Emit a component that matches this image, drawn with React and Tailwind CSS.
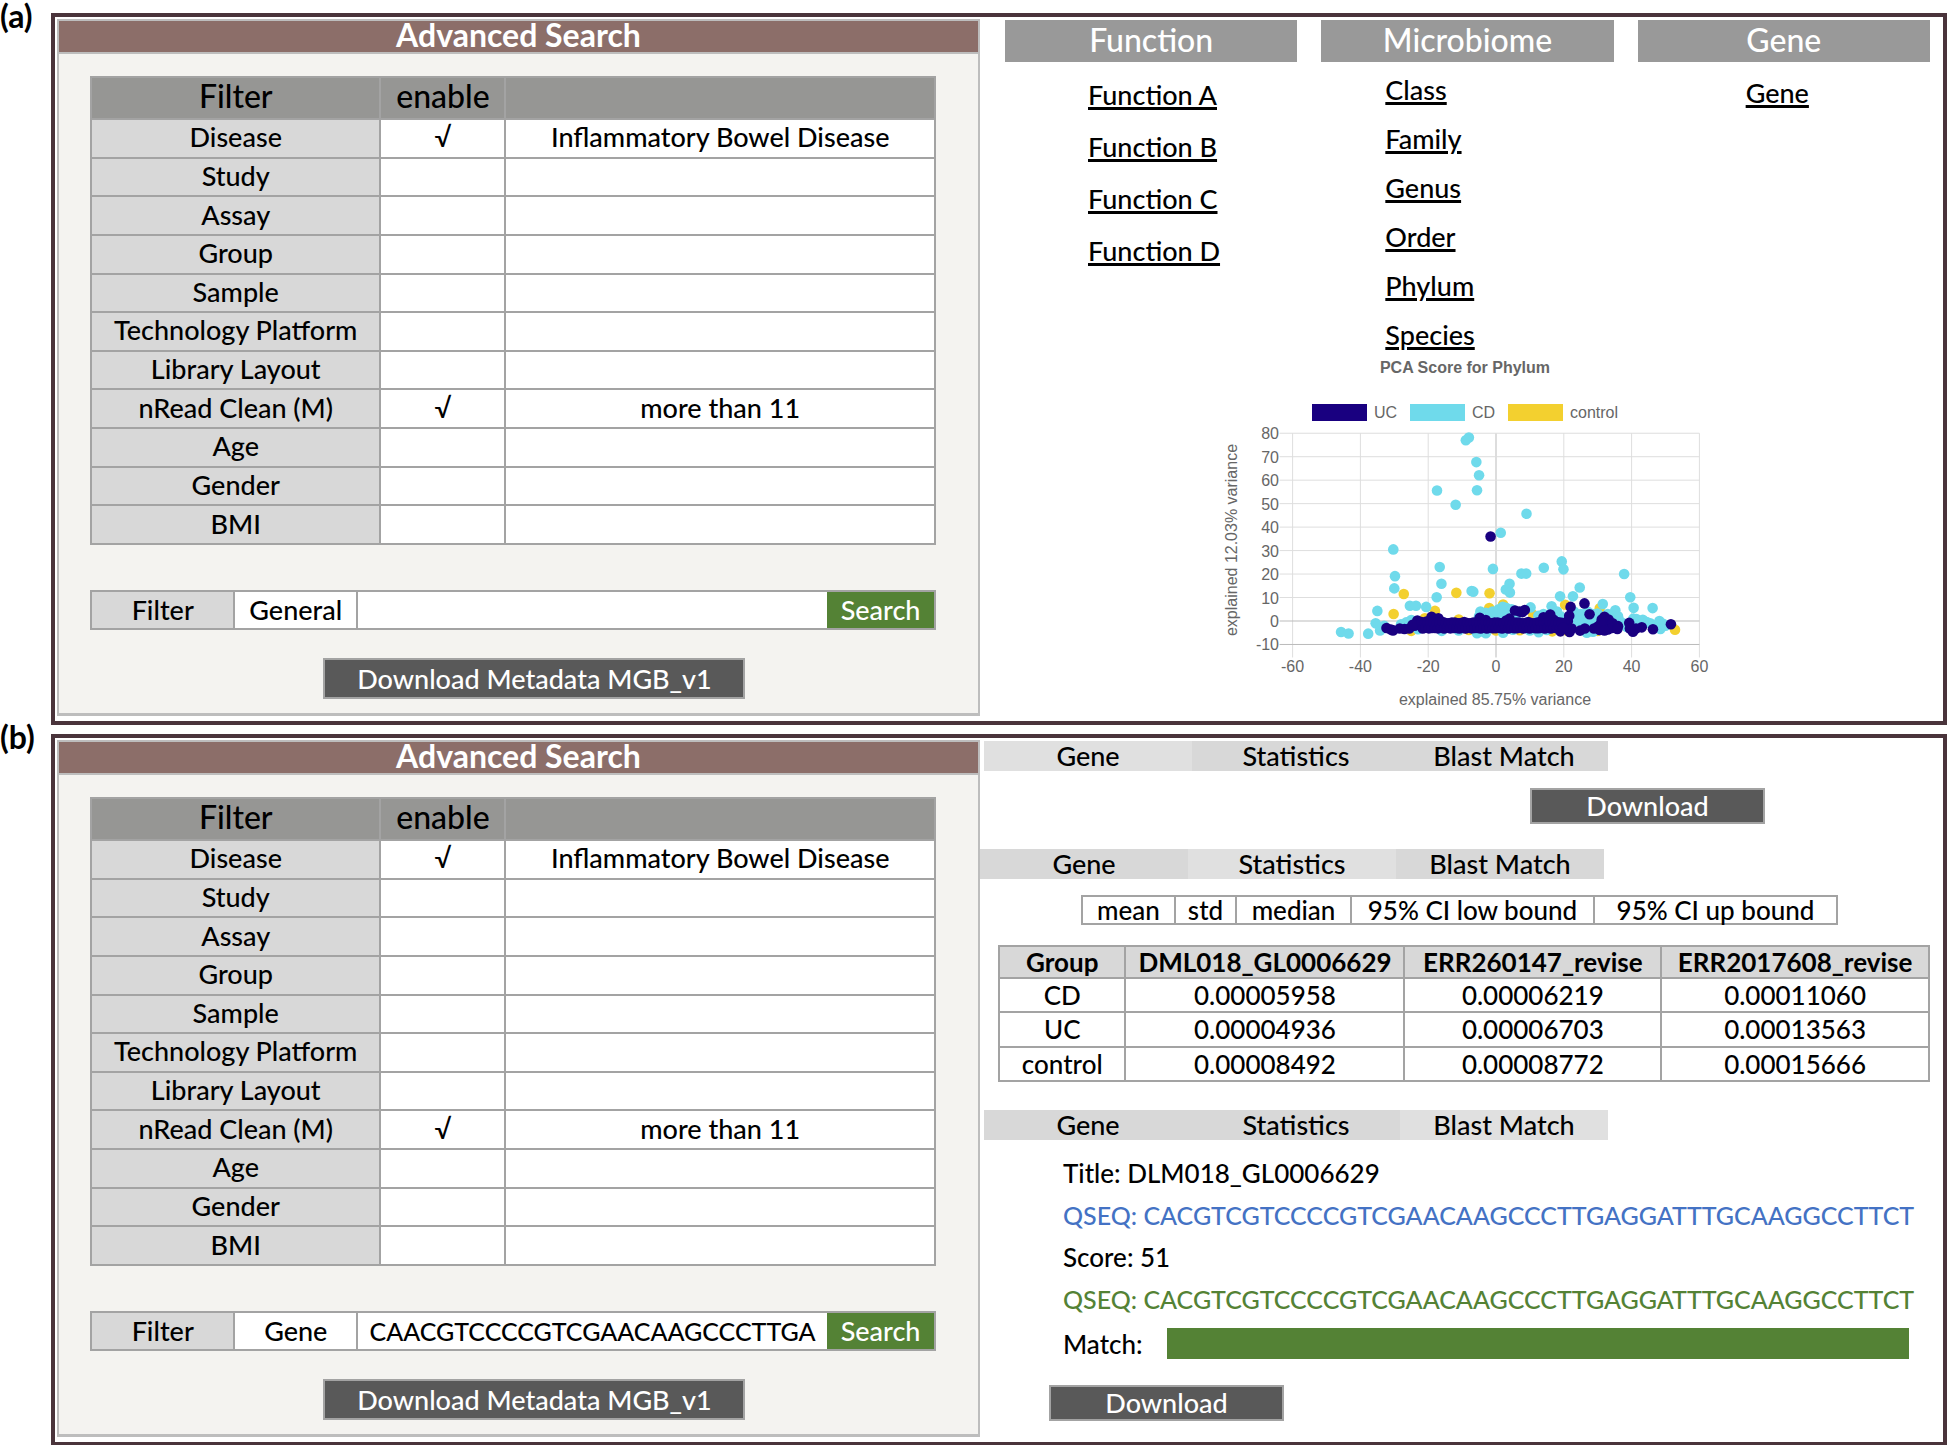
import React, { useState } from "react";

const filters = [
  { name: "Disease", value: "Inflammatory Bowel Disease" },
  { name: "Study" },
  { name: "Assay" },
  { name: "Group" },
  { name: "Sample" },
  { name: "Technology Platform" },
  { name: "Library Layout" },
  { name: "nRead Clean (M)", value: "more than 11" },
  { name: "Age" },
  { name: "Gender" },
  { name: "BMI" },
];

const functions = ["Function A", "Function B", "Function C", "Function D"];
const ranks = ["Class", "Family", "Genus", "Order", "Phylum", "Species"];

const abundance = [
  ["CD", "0.00005958", "0.00006219", "0.00011060"],
  ["UC", "0.00004936", "0.00006703", "0.00013563"],
  ["control", "0.00008492", "0.00008772", "0.00015666"],
];

const sequence = "CACGTCGTCCCCGTCGAACAAGCCCTTGAGGATTTGCAAGGCCTTCT";

// PCA scores as [PC1, PC2]
const control = [
  [-27.2, 11.5], [-30.2, 3], [-11.7, 12], [-1.9, 11.8], [-2, 5.5], [2.1, 7], [-18, 4.3],
  [20.4, 6.9], [52.8, -3.7], [-25, -4.2], [-21, 1.2], [-11, 0.6], [11, 2.6], [30.6, 5.4],
  [-8, -3.8], [0, -4], [7, -3.9], [16.6, -4.4], [21, -4.2], [30, -4.2],
];

const cd = [
  [-8.9, 77], [-8, 78.2], [-5.8, 67.7], [-5, 62.1], [-5.6, 55.7], [-17.4, 55.6], [-11.9, 49.5],
  [9, 45.7], [1.4, 37.6], [-30.3, 30.5], [-29.8, 19.1], [-30, 13.9], [-16.6, 23], [-16.1, 15.9],
  [-17.5, 10.1], [-0.9, 22.2], [-7.2, 12.8], [-6.7, 12.5], [4, 15.9], [2.9, 13.4], [4.1, 12.1],
  [7.5, 20.2], [8.9, 20.2], [14.1, 22.7], [19.4, 25.4], [19.9, 22], [37.8, 20], [24.7, 14.3],
  [18.9, 10.5], [22.7, 10.5], [39.6, 10.1], [40.6, 5.6], [46.2, 5.5], [31.5, 7.2], [35.2, 4.6],
  [-35, 4.3], [-35.5, -1], [-45.7, -4.7], [-43.5, -5.3], [-37.7, -5.4], [-34.2, -4], [-33, -2],
  [-25.4, 6.5], [-23.6, 6.5], [-20.6, 6], [10.2, 5.8], [16.4, 6.3], [-4.6, 4], [-3, 3.5],
  [-1, 4], [0.8, 5], [2, 6], [3, 5.6], [4.6, 5], [-0.2, 2], [1.8, 3], [3.5, 3], [6, 2.6], [-5, 2],
  [-28, -1.4], [-26.5, -0.6], [-25, 0.4], [-23, -3.5], [-16, -4.2], [-11, -4], [-5.6, -5.2],
  [-3, -5.2], [-4.4, -4.4], [2.1, -5], [12.6, -4.8], [5, -3.7], [10, -4], [15, -3.8], [18, 4],
  [12.5, 2.2], [14, 3], [19, 2], [23, 4], [24, 2], [25, 3], [26, 1], [27, 4], [28.5, 3], [29, 1],
  [30, 3.2], [24, 0], [25.6, -1], [27, -0.5], [28, -2], [29, 0], [33, 3], [34.5, 2], [36, 2],
  [36.5, 0], [37.5, -1], [26.8, -5], [28.6, -4.6], [38.5, -2.5], [40.5, 1], [41.4, 0.8],
  [43.3, 0.5], [44.5, -0.5], [45.5, -1], [47, -2], [48.2, 0], [49.3, -1.2], [48.5, -3.4], [50, -2],
];

const uc = [
  [-1.6, 36], [5.6, 4.5], [7, 4], [8.5, 4.7], [7.8, 3.8], [22, 6], [26.1, 7.5], [27.6, 2.9],
  [51.6, -1.4], [46.3, -3.5], [43, -2.7], [39.3, -0.8], [40.4, -4.6], [41.3, -3.2], [39.5, -3.2],
  [-32.3, -3], [-31, -3.6], [-30.4, -4], [-28.4, -3.2], [-27, -3.4], [-25.6, -3.2], [-24, -2],
  [-23.2, 0.2], [-24.6, -1.6], [-19, 1.8], [-17, 1.2], [-20.5, -0.2], [-4.8, 1.4], [-3, 0.4],
  [4, 1], [3, 0.2], [14, 1.6], [16, 2.8], [15, 1], [17, 0.5], [13.2, -0.3], [21.6, 2.2], [21.2, 0],
  [20.4, -1.5], [19, -4.4], [21.7, -4.7], [20.4, -3], [22.3, -3.2], [24.8, -4.1], [26.2, -3.2],
  [19.2, -1.5], [28.9, -3.2], [30, -2.4], [30.6, -3.8], [31.2, 0.6], [32, 1.8], [33.2, 0.6],
  [32.4, -1.6], [31, -1], [33, -3.6], [34.4, -1], [34.2, -3], [36, -2.2], [35.8, -3.4], [32, -4],
];

// the samples crowd into a narrow band just under zero
for (let x = -22; x < 20; x += 0.9) {
  uc.push([x, -0.4 - Math.abs(Math.sin(x)) * 0.6], [x + 0.4, -2.6 - Math.abs(Math.cos(x * 2)) * 0.6]);
}

const series = [
  { name: "control", color: "#f3d02f", points: control },
  { name: "CD", color: "#6fdaeb", points: cd },
  { name: "UC", color: "#190080", points: uc },
];

const legend = [
  { name: "UC", color: "#190080", x: 92 },
  { name: "CD", color: "#6fdaeb", x: 190 },
  { name: "control", color: "#f3d02f", x: 288 },
];

const px = (v) => 276 + v * 3.39;
const py = (v) => 263 - v * 2.347;

function PcaChart() {
  const xTicks = [-60, -40, -20, 0, 20, 40, 60];
  const yTicks = [-10, 0, 10, 20, 30, 40, 50, 60, 70, 80];

  return (
    <svg
      viewBox="0 0 500 355"
      className="block w-[500px] h-[355px] font-['Liberation_Sans',sans-serif] font-normal"
      fill="#666"
    >
      <text x="245" y="15" fontSize="16" fontWeight="bold" textAnchor="middle">
        PCA Score for Phylum
      </text>
      {legend.map((item) => (
        <g key={item.name}>
          <rect x={item.x} y="46" width="55" height="17" fill={item.color} />
          <text x={item.x + 62} y="60" fontSize="16">{item.name}</text>
        </g>
      ))}

      {xTicks.map((t) => (
        <g key={t}>
          <line x1={px(t)} x2={px(t)} y1={py(80)} y2={py(-10) + 13} stroke={t === 0 ? "#bbb" : "#dedede"} />
          <text x={px(t)} y="314" fontSize="16" textAnchor="middle">{t}</text>
        </g>
      ))}
      {yTicks.map((t) => (
        <g key={t}>
          <line x1={px(-60) - 13} x2={px(60)} y1={py(t)} y2={py(t)} stroke={t === 0 || t === -10 ? "#bbb" : "#dedede"} />
          <text x="59" y={py(t) + 6} fontSize="16" textAnchor="end">{t}</text>
        </g>
      ))}

      {series.map((s) => (
        <g key={s.name} fill={s.color}>
          {s.points.map(([x, y], i) => (
            <circle key={i} cx={px(x)} cy={py(y)} r="5.3" />
          ))}
        </g>
      ))}

      <text x="275" y="347" fontSize="16" textAnchor="middle">explained 85.75% variance</text>
      <text transform="translate(17 182) rotate(-90)" fontSize="16" textAnchor="middle">
        explained 12.03% variance
      </text>
    </svg>
  );
}

function AdvancedSearch({ id, scope, initialQuery }) {
  const [query, setQuery] = useState(initialQuery);

  return (
    <section className="border-2 border-b-[3px] border-[#bdbdbd] bg-[#f4f3f0]">
      <h2 className="h-[31px] bg-[#8c6e69] text-center text-[32px] leading-[27px] font-bold text-white">
        Advanced Search
      </h2>
      <div className="border-t-2 border-[#bdbdbd] pt-[22px] pb-[14px] pl-[31px] pr-[42px]">
        <table className="h-[469px] w-full table-fixed border-collapse bg-white text-center text-[27px] leading-[30px]">
          <colgroup>
            <col className="w-[34.3%]" />
            <col className="w-[14.8%]" />
            <col />
          </colgroup>
          <thead>
            <tr className="h-[42px] bg-[#969694] text-[32px]">
              <th className="border-2 border-[#a3a3a3] pb-1 font-medium">Filter</th>
              <th className="border-2 border-[#a3a3a3] pb-1 font-medium">enable</th>
              <th className="border-2 border-[#a3a3a3]"></th>
            </tr>
          </thead>
          <tbody>
            {filters.map((f) => (
              <tr key={f.name}>
                <th className="border-2 border-[#a3a3a3] bg-[#d8d8d8] pb-0.5 font-medium">{f.name}</th>
                <td className="border-2 border-[#a3a3a3] pb-0.5">{f.value ? "√" : ""}</td>
                <td className="border-2 border-[#a3a3a3] pb-0.5">{f.value}</td>
              </tr>
            ))}
          </tbody>
        </table>

        <form
          className="mt-[45px] flex h-10 border-2 border-[#a3a3a3] bg-white text-[27px] leading-[30px]"
          onSubmit={(e) => e.preventDefault()}
        >
          <label htmlFor={id} className="flex w-[16.8%] items-center justify-center bg-[#d8d8d8]">
            Filter
          </label>
          <select
            aria-label="Filter scope"
            className="w-[14.8%] appearance-none border-x-2 border-[#a3a3a3] text-center [text-align-last:center]"
            defaultValue={scope}
          >
            <option>General</option>
            <option>Gene</option>
          </select>
          <input
            id={id}
            type="text"
            className="min-w-0 flex-1 px-1 text-center text-[25px]"
            value={query}
            onChange={(e) => setQuery(e.target.value)}
          />
          <button className="w-[12.7%] bg-[#548235] text-white">Search</button>
        </form>

        <button className="mt-7 ml-[27.6%] block h-[41px] w-[422px] border-2 border-[#a3a3a3] bg-[#595959] text-[27px] leading-[34px] text-white">
          Download Metadata MGB_v1
        </button>
      </div>
    </section>
  );
}

function LinkList({ items, className }) {
  return (
    <ul className={className}>
      {items.map((item) => (
        <li key={item}>
          <a href="#" className="underline decoration-3 underline-offset-2">{item}</a>
        </li>
      ))}
    </ul>
  );
}

function Tabs({ active, className }) {
  return (
    <div className={`flex text-[27px] leading-[30px] ${className}`}>
      {["Gene", "Statistics", "Blast Match"].map((tab) => (
        <button key={tab} className={`w-[208px] ${tab === active ? "bg-[#e0e0e0]" : "bg-[#d8d8d8]"}`}>
          {tab}
        </button>
      ))}
    </div>
  );
}

function DownloadButton({ className }) {
  return (
    <button
      className={`block h-9 w-[235px] border-2 border-[#a3a3a3] bg-[#595959] text-[27px] leading-[30px] text-white ${className}`}
    >
      Download
    </button>
  );
}

function Panel({ label, children }) {
  return (
    <div className="flex">
      <div className="-mt-[13px] w-[51px] shrink-0 text-[32px] leading-8 font-bold">{label}</div>
      <div className="grid min-w-0 flex-1 grid-cols-[923fr_963fr] border-4 border-[#4a343b] pt-0.5 pb-[5px] pl-0.5">
        {children}
      </div>
    </div>
  );
}

export default function App() {
  return (
    <main className="flex flex-col gap-[9px] bg-white pt-[13px] pr-[6px] font-[Lato,Carlito,sans-serif] font-medium text-black">
      <Panel label="(a)">
        <AdvancedSearch id="query-a" scope="General" initialQuery="" />
        <div className="min-w-0">
          <div className="mt-px grid grid-cols-3 gap-x-6 pr-[13px] pl-[25px] text-[27px] leading-[30px]">
            {["Function", "Microbiome", "Gene"].map((title) => (
              <h3 key={title} className="h-[42px] bg-[#999] text-center text-[32px] leading-10 text-white">
                {title}
              </h3>
            ))}
            <LinkList items={functions} className="flex flex-col gap-[22px] pt-[18px] pl-[83px]" />
            <LinkList items={ranks} className="flex flex-col gap-[19px] pt-[13px] pl-16" />
            <LinkList items={["Gene"]} className="pt-4 pl-[108px]" />
          </div>
          <div className="mt-2 pl-60">
            <PcaChart />
          </div>
        </div>
      </Panel>

      <Panel label="(b)">
        <AdvancedSearch id="query-b" scope="Gene" initialQuery="CAACGTCCCCGTCGAACAAGCCCTTGA" />
        <div className="min-w-0">
          <Tabs active="Gene" className="ml-1 mt-px" />
          <DownloadButton className="mt-[17px] ml-[550px]" />
          <Tabs active="Statistics" className="mt-[25px]" />

          <div className="mt-4 ml-[101px] flex h-[30px] w-[757px] divide-x-2 divide-[#a3a3a3] border-2 border-[#a3a3a3] text-[26px] leading-[26px]">
            <button className="w-[93px]">mean</button>
            <button className="w-[61px]">std</button>
            <button className="w-[115px]">median</button>
            <button className="w-[243px]">95% CI low bound</button>
            <button className="flex-1">95% CI up bound</button>
          </div>

          <div className="mt-5 pr-[13px] pl-[18px]">
            <table className="h-[137px] w-full table-fixed border-collapse text-center text-[26px] leading-[30px]">
              <colgroup>
                <col className="w-[13.6%]" />
                <col className="w-[30%]" />
                <col className="w-[27.6%]" />
                <col />
              </colgroup>
              <thead>
                <tr className="bg-[#d8d8d8]">
                  {["Group", "DML018_GL0006629", "ERR260147_revise", "ERR2017608_revise"].map((h) => (
                    <th key={h} className="border-2 border-[#a3a3a3] font-bold">{h}</th>
                  ))}
                </tr>
              </thead>
              <tbody>
                {abundance.map((row) => (
                  <tr key={row[0]}>
                    {row.map((cell) => (
                      <td key={cell} className="border-2 border-[#a3a3a3]">{cell}</td>
                    ))}
                  </tr>
                ))}
              </tbody>
            </table>
          </div>

          <Tabs active="Blast Match" className="mt-7 ml-1" />

          <div className="mt-[18px] flex flex-col gap-3 pr-[34px] pl-[83px] text-[26px] leading-[30px] whitespace-nowrap">
            <p>Title: DLM018_GL0006629</p>
            <p className="text-[25px] text-[#4472c4]">QSEQ: {sequence}</p>
            <p>Score: 51</p>
            <p className="text-[25px] text-[#548235]">QSEQ: {sequence}</p>
            <div className="flex items-center gap-6 pt-0.5">
              <span>Match:</span>
              <div className="h-[31px] flex-1 bg-[#548235]"></div>
            </div>
          </div>
          <DownloadButton className="mt-[26px] ml-[69px]" />
        </div>
      </Panel>
    </main>
  );
}
